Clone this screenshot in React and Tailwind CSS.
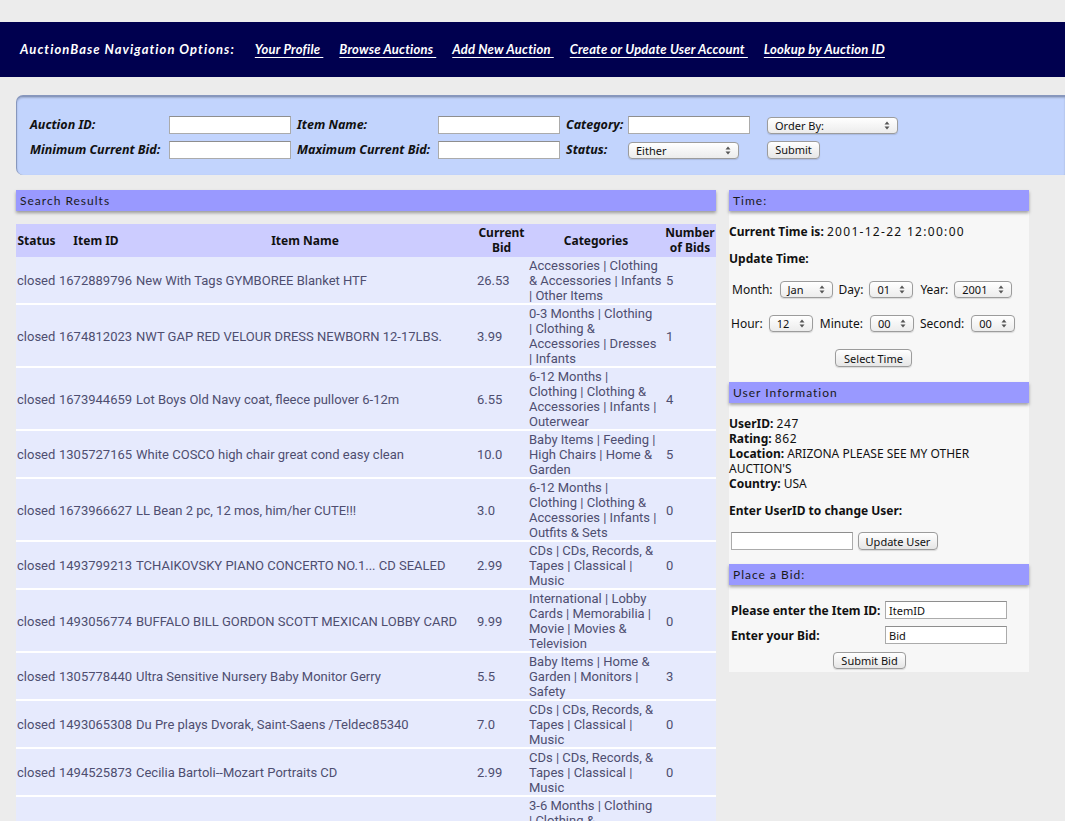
import React from "react";

const rows = [
  ["1672889796", "New With Tags GYMBOREE Blanket HTF", "26.53", ["Accessories | Clothing", "& Accessories | Infants", "| Other Items"], "5"],
  ["1674812023", "NWT GAP RED VELOUR DRESS NEWBORN 12-17LBS.", "3.99", ["0-3 Months | Clothing", "| Clothing &", "Accessories | Dresses", "| Infants"], "1"],
  ["1673944659", "Lot Boys Old Navy coat, fleece pullover 6-12m", "6.55", ["6-12 Months |", "Clothing | Clothing &", "Accessories | Infants |", "Outerwear"], "4"],
  ["1305727165", "White COSCO high chair great cond easy clean", "10.0", ["Baby Items | Feeding |", "High Chairs | Home &", "Garden"], "5"],
  ["1673966627", "LL Bean 2 pc, 12 mos, him/her CUTE!!!", "3.0", ["6-12 Months |", "Clothing | Clothing &", "Accessories | Infants |", "Outfits & Sets"], "0"],
  ["1493799213", "TCHAIKOVSKY PIANO CONCERTO NO.1... CD SEALED", "2.99", ["CDs | CDs, Records, &", "Tapes | Classical |", "Music"], "0"],
  ["1493056774", "BUFFALO BILL GORDON SCOTT MEXICAN LOBBY CARD", "9.99", ["International | Lobby", "Cards | Memorabilia |", "Movie | Movies &", "Television"], "0"],
  ["1305778440", "Ultra Sensitive Nursery Baby Monitor Gerry", "5.5", ["Baby Items | Home &", "Garden | Monitors |", "Safety"], "3"],
  ["1493065308", "Du Pre plays Dvorak, Saint-Saens /Teldec85340", "7.0", ["CDs | CDs, Records, &", "Tapes | Classical |", "Music"], "0"],
  ["1494525873", "Cecilia Bartoli--Mozart Portraits CD", "2.99", ["CDs | CDs, Records, &", "Tapes | Classical |", "Music"], "0"],
];

const partialRow = ["3-6 Months | Clothing", "| Clothing &", "Accessories | Infants", "| Outfits & Sets"];

function Arrows() {
  return (
    <svg width="6" height="9" viewBox="0 0 6 9" className="shrink-0">
      <path d="M3 0.5 L5.5 3.5 L0.5 3.5 Z" fill="#555" />
      <path d="M3 8.5 L5.5 5.5 L0.5 5.5 Z" fill="#555" />
    </svg>
  );
}

function Sel({ className, children }) {
  return (
    <div
      className={
        "inline-flex items-center justify-between rounded-[4px] border border-[#9c9c9c] bg-linear-to-b from-white to-[#ececec] pl-[7px] pr-[7px] text-[11px] text-[#111] font-['Noto_Sans',sans-serif] shadow-[0_1px_1px_rgba(0,0,0,0.12)] " +
        className
      }
    >
      <span className="leading-none">{children}</span>
      <Arrows />
    </div>
  );
}

function Btn({ className, children }) {
  return (
    <div
      className={
        "inline-flex items-center justify-center rounded-[4px] border border-[#9c9c9c] bg-linear-to-b from-white to-[#e6e6e6] text-[11px] text-[#111] font-['Noto_Sans',sans-serif] shadow-[0_1px_1px_rgba(0,0,0,0.12)] " +
        className
      }
    >
      {children}
    </div>
  );
}

function Inp({ className, value }) {
  return (
    <div
      className={
        "flex items-center border border-[#ababab] border-t-[#8e8e8e] bg-white pl-[3px] text-[11px] text-[#111] font-['Noto_Sans',sans-serif] " +
        className
      }
    >
      {value}
    </div>
  );
}

function Bar({ children }) {
  return (
    <div className="relative z-10 flex h-[21px] items-center bg-[#9999ff] pl-[4px] text-[12px] tracking-[1px] text-[#1a1a1a] font-['Lato',sans-serif] shadow-[0_2px_3px_rgba(0,0,0,0.35)]">
      {children}
    </div>
  );
}

export default function App() {
  const navLink =
    "ml-[16px] text-white underline decoration-1 underline-offset-[3px] whitespace-pre";
  const label = "text-[12.5px] font-bold italic text-[#111] whitespace-nowrap";
  const td = "border-b-2 border-white pt-px align-middle";
  const th = "border-b-2 border-[#ccccff] pt-px text-center align-middle font-bold";
  return (
    <div className="min-h-screen bg-[#ececec] pt-[22px] font-['Noto_Sans',sans-serif]">
      {/* Nav */}
      <div className="flex h-[55px] items-center bg-[#00004f] pl-[20px] pt-px text-[13px] font-bold italic tracking-[0.2px] font-['Lato',sans-serif]">
        <span className="text-white tracking-[1.05px]">AuctionBase Navigation Options:</span>
        <a className={navLink + " ml-[20px]"}>{"Your Profile\u00a0"}</a>
        <a className={navLink}>{"Browse Auctions\u00a0"}</a>
        <a className={navLink}>{"Add New Auction\u00a0"}</a>
        <a className={navLink}>{"Create or Update User Account\u00a0"}</a>
        <a className={navLink}>{"Lookup by Auction ID"}</a>
      </div>

      {/* Search panel */}
      <div className="ml-[16px] mt-[18px] h-[80px] rounded-l-[7px] border-l border-t-2 border-[#8797bd] bg-[#c2d4fd] pl-[13px] pt-[19px] shadow-[inset_0_1px_2px_rgba(0,0,0,0.2)]">
        <div className="grid grid-cols-[139px_128px_141px_128px_62px_139px_auto] grid-rows-[18px_18px] items-center gap-y-[7px]">
          <span className={label}>Auction ID:</span>
          <Inp className="h-[18px] w-[122px]" />
          <span className={label}>Item Name:</span>
          <Inp className="h-[18px] w-[122px]" />
          <span className={label}>Category:</span>
          <Inp className="h-[18px] w-[122px]" />
          <Sel className="h-[17px] w-[131px]">Order By:</Sel>

          <span className={label}>Minimum Current Bid:</span>
          <Inp className="h-[18px] w-[122px]" />
          <span className={label}>Maximum Current Bid:</span>
          <Inp className="h-[18px] w-[122px]" />
          <span className={label}>Status:</span>
          <Sel className="h-[17px] w-[111px]">Either</Sel>
          <Btn className="h-[18px] w-[53px]">Submit</Btn>
        </div>
      </div>

      {/* Main */}
      <div className="mt-[15px] flex items-start pl-[16px]">
        {/* Left */}
        <div className="w-[700px]">
          <Bar>Search Results</Bar>
          <table className="mt-[13px] w-[700px] table-fixed border-collapse text-left">
            <colgroup>
              <col className="w-[41px]" />
              <col className="w-[78px]" />
              <col className="w-[340px]" />
              <col className="w-[53px]" />
              <col className="w-[136px]" />
              <col className="w-[52px]" />
            </colgroup>
            <thead>
              <tr className="bg-[#ccccff] text-[12px] font-bold leading-[15px] text-[#111]">
                <th className={th}>Status</th>
                <th className={th}>Item ID</th>
                <th className={th}>Item Name</th>
                <th className={th}>
                  Current
                  <br />
                  Bid
                </th>
                <th className={th}>Categories</th>
                <th className={th + " whitespace-nowrap"}>
                  Number
                  <br />
                  of Bids
                </th>
              </tr>
            </thead>
            <tbody className="font-['Roboto',sans-serif] text-[13px] leading-[15px] text-[#4e4e70]">
              {rows.map((r) => (
                <tr key={r[0]} className="bg-[#e6eafd]">
                  <td className={td + " pl-px"}>closed</td>
                  <td className={td + " pl-[2px]"}>{r[0]}</td>
                  <td className={td + " pl-px whitespace-nowrap"}>{r[1]}</td>
                  <td className={td + " pl-[2px]"}>{r[2]}</td>
                  <td className={td + " pl-px"}>
                    {r[3].map((l, i) => (
                      <div key={i} className="whitespace-nowrap">
                        {l}
                      </div>
                    ))}
                  </td>
                  <td className={td + " pl-[2px]"}>{r[4]}</td>
                </tr>
              ))}
              <tr className="bg-[#e6eafd]">
                <td className={td} />
                <td className={td} />
                <td className={td} />
                <td className={td} />
                <td className={td + " pl-px"}>
                  {partialRow.map((l, i) => (
                    <div key={i} className="whitespace-nowrap">
                      {l}
                    </div>
                  ))}
                </td>
                <td className={td} />
              </tr>
            </tbody>
          </table>
        </div>

        {/* Right */}
        <div className="ml-[13px] w-[300px] text-[12px] leading-[15px] text-[#111]">
          <Bar>Time:</Bar>
          <div className="bg-[#f7f7f7] pb-[15px] pt-[13px]">
            <div>
              <b>Current Time is:</b> <span className="tracking-[1.3px]">2001-12-22 12:00:00</span>
            </div>
            <div className="mt-[12px] font-bold">Update Time:</div>
            <div className="mt-[15px] flex h-[17px] items-center pl-[3px]">
              <span>Month:</span>
              <Sel className="ml-[7px] h-[17px] w-[53px]">Jan</Sel>
              <span className="ml-[6px]">Day:</span>
              <Sel className="ml-[6px] h-[17px] w-[44px]">01</Sel>
              <span className="ml-[7px]">Year:</span>
              <Sel className="ml-[6px] h-[17px] w-[58px]">2001</Sel>
            </div>
            <div className="mt-[17px] flex h-[17px] items-center pl-[2px]">
              <span>Hour:</span>
              <Sel className="ml-[6px] h-[17px] w-[44px]">12</Sel>
              <span className="ml-[7px]">Minute:</span>
              <Sel className="ml-[7px] h-[17px] w-[44px]">00</Sel>
              <span className="ml-[6px]">Second:</span>
              <Sel className="ml-[7px] h-[17px] w-[44px]">00</Sel>
            </div>
            <div className="mt-[17px] flex justify-center pr-[11px]">
              <Btn className="h-[18px] w-[77px]">Select Time</Btn>
            </div>
          </div>

          <Bar>User Information</Bar>
          <div className="bg-[#f7f7f7] pb-[14px] pt-[13px]">
            <div>
              <b>UserID:</b> <span className="tracking-[0.6px]">247</span>
            </div>
            <div>
              <b>Rating:</b> <span className="tracking-[0.6px]">862</span>
            </div>
            <div>
              <b>Location:</b> ARIZONA PLEASE SEE MY OTHER
              <br />
              AUCTION'S
            </div>
            <div>
              <b>Country:</b> USA
            </div>
            <div className="mt-[12px] font-bold">Enter UserID to change User:</div>
            <div className="mt-[14px] flex items-center pl-[2px]">
              <Inp className="h-[18px] w-[122px]" />
              <Btn className="ml-[5px] h-[18px] w-[80px]">Update User</Btn>
            </div>
          </div>

          <Bar>Place a Bid:</Bar>
          <div className="bg-[#f7f7f7] pb-[3px] pt-[16px]">
            <div className="grid grid-cols-[154px_122px] grid-rows-[18px_18px] items-center gap-y-[7px] pl-[2px]">
              <span className="font-bold">Please enter the Item ID:</span>
              <Inp className="h-[18px] w-[122px]" value="ItemID" />
              <span className="font-bold">Enter your Bid:</span>
              <Inp className="h-[18px] w-[122px]" value="Bid" />
            </div>
            <div className="mt-[8px] flex justify-center pr-[19px]">
              <Btn className="h-[17px] w-[73px]">Submit Bid</Btn>
            </div>
          </div>
        </div>
      </div>
    </div>
  );
}
